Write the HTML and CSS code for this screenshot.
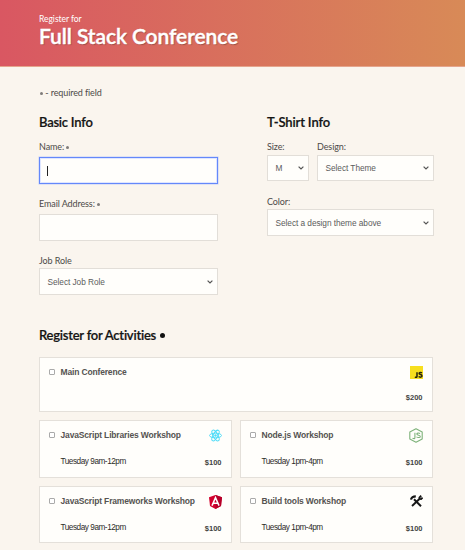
FILE: index.html
```html
<!DOCTYPE html>
<html lang="en">
<head>
<meta charset="utf-8">
<title>Full Stack Conference</title>
<link rel="stylesheet" href="styles.css">
</head>
<body>
<header class="hero">
  <p class="kicker">Register for</p>
  <h1>Full Stack Conference</h1>
</header>
<main>
  <p class="note"><i class="dot"></i> - required field</p>
  <div class="columns">
    <section>
      <h2 class="basic">Basic Info</h2>
      <div class="field name"><label>Name: <i class="dot"></i></label><div class="control focused"><span class="caret"></span></div></div>
      <div class="field email"><label>Email Address: <i class="dot"></i></label><div class="control"></div></div>
      <div class="field job"><label>Job Role</label><div class="control"><span>Select Job Role</span><svg class="chev" viewBox="0 0 6 4"><path d="M.6.6 3 3 5.4.6"/></svg></div></div>
    </section>
    <section>
      <h2 class="shirt">T-Shirt Info</h2>
      <div class="pair">
        <div class="field"><label>Size:</label><div class="control"><span>M</span><svg class="chev" viewBox="0 0 6 4"><path d="M.6.6 3 3 5.4.6"/></svg></div></div>
        <div class="field"><label>Design:</label><div class="control"><span>Select Theme</span><svg class="chev" viewBox="0 0 6 4"><path d="M.6.6 3 3 5.4.6"/></svg></div></div>
      </div>
      <div class="field color"><label>Color:</label><div class="control"><span>Select a design theme above</span><svg class="chev" viewBox="0 0 6 4"><path d="M.6.6 3 3 5.4.6"/></svg></div></div>
    </section>
  </div>
  <h2 class="activities">Register for Activities <i class="dot big"></i></h2>
  <div class="grid">
    <article class="card wide">
      <i class="box"></i><h3>Main Conference</h3>
      <svg class="icon" viewBox="0 0 13 13"><path fill="#f7df1e" d="M0 0h13v13H0z"/><path d="M7 6.200v4.200q0 1.300-2.200.7M12 6.900c-1-.8-2.900-.5-2.900.5 0 1.400 2.900.9 2.900 2.500 0 1.400-2.200 1.600-3.400.6" fill="none" stroke="#25230c" stroke-width="1.500"/></svg>
      <b class="price">$200</b>
    </article>
    <article class="card">
      <i class="box"></i><h3>JavaScript Libraries Workshop</h3>
      <svg class="icon" viewBox="0 0 13 13"><g fill="none" stroke="#4edcf8" stroke-width=".95"><ellipse cx="6.5" cy="6.5" rx="6" ry="2.3"/><ellipse cx="6.5" cy="6.5" rx="6" ry="2.3" transform="rotate(60 6.5 6.5)"/><ellipse cx="6.5" cy="6.5" rx="6" ry="2.3" transform="rotate(120 6.5 6.5)"/></g><circle cx="6.5" cy="6.5" r="1.200" fill="#4edcf8"/></svg>
      <p class="when">Tuesday 9am-12pm</p><b class="price">$100</b>
    </article>
    <article class="card">
      <i class="box"></i><h3>Node.js Workshop</h3>
      <svg class="icon node" viewBox="0 0 14 15"><g fill="none" stroke="#7fb37b"><path stroke-width="1.1" stroke-linejoin="round" d="m7 .7 6.2 3.4v6.8L7 14.3.8 10.900V4.100z"/><path stroke-width="1.100" d="M5.900 4.700v5.100q0 1.400-2.400.5M11 5.500c-1.300-.8-3.200-.5-3.200.6 0 1.600 3.500.7 3.500 2.300 0 1.400-2.500 1.500-3.800.5"/></g></svg>
      <p class="when">Tuesday 1pm-4pm</p><b class="price">$100</b>
    </article>
    <article class="card">
      <i class="box"></i><h3>JavaScript Frameworks Workshop</h3>
      <svg class="icon angular" viewBox="0 0 13 14"><path fill="#d3002d" d="M6.500 0 13 2.300l-1 8.700-5.500 3L1 11 0 2.300z"/><path fill="#b50029" d="M6.500 0 13 2.300l-1 8.700-5.500 3z"/><path fill="none" stroke="#fff" stroke-width="1.500" d="M3 10.600 6.500 2.600l3.500 8M4.500 8.200h4"/></svg>
      <p class="when">Tuesday 9am-12pm</p><b class="price">$100</b>
    </article>
    <article class="card">
      <i class="box"></i><h3>Build tools Workshop</h3>
      <svg class="icon tools" viewBox="0 0 13 12"><g fill="none" stroke="#151515"><path stroke-width="2" d="m4 4.200 7 7"/><path stroke-width="1.900" d="M2 11 9.400 4"/><path stroke-width="2.200" d="M1 4.600C1.500 2.300 3 1.300 5.800 1.300"/><path stroke-width="1.800" d="M11.200.7 9.400 2.500l.2 1.400 1.500.2L12.600 2.500"/></g></svg>
      <p class="when">Tuesday 1pm-4pm</p><b class="price">$100</b>
    </article>
  </div>
</main>
</body>
</html>
```
FILE: styles.css
```css
* { box-sizing: border-box; }
body, h1, h2, h3, p { margin: 0; }
body {
  background: #faf5ee;
  font: 9px/12px Lato, sans-serif;
  letter-spacing: -.1px;
  color: #4c4a48;
  height: 550px;
  overflow: hidden;
}
.hero {
  height: 67px;
  padding: 13px 39px 0;
  color: #fff;
  background: linear-gradient(90deg, #d95762, #d88a57);
  border-bottom: 1px solid #e5a58d;
}
.kicker { font-size: 8.5px; line-height: 13px; letter-spacing: -.03px; }
h1 {
  font-size: 21px;
  line-height: 20px;
  font-weight: 600;
  letter-spacing: -.08px;
  text-shadow: 1px 1px 1px #7a403a99;
  -webkit-text-stroke: .4px #fff;
  white-space: nowrap;
}
main { padding: 20px 32px 0 39px; }
.note { height: 12px; padding-left: 1px; }
.dot {
  display: inline-block;
  width: 3px;
  height: 3px;
  border-radius: 50%;
  background: #7f7c7a;
  vertical-align: 1px;
}
.big { width: 5px; height: 5px; background: #111; vertical-align: 2px; margin-left: 1px; }
.columns {
  display: grid;
  grid-template-columns: 179px 167px;
  column-gap: 49px;
  margin-top: 15px;
  height: 182px;
}
h2 {
  font-size: 13px;
  line-height: 16px;
  font-weight: 600;
  letter-spacing: -.24px;
  color: #141414;
  -webkit-text-stroke: .2px #141414;
  white-space: nowrap;
}
.columns h2 { margin-bottom: 11px; }
.columns .shirt { letter-spacing: -.15px; }
label { display: block; height: 14px; line-height: 12px; }
.control {
  display: flex;
  align-items: center;
  justify-content: space-between;
  height: 27px;
  padding: 0 4px 0 7.5px;
  background: #fffefb;
  border: 1px solid #e2ded8;
  font: 8.3px "Liberation Sans", sans-serif;
  letter-spacing: -.05px;
  color: #5c5c5c;
}
.focused { border-color: #6488fa; box-shadow: 0 0 0 .5px #c3cff8, inset 0 0 0 1px #dfe6ff; }
.caret { width: 1px; height: 10px; background: #222; margin-left: -.5px; }
.chev { width: 6px; height: 4px; fill: none; stroke: #555; stroke-width: 1.2; }
.name { height: 57px; }
.name label, .email label { height: 16px; }
.email { height: 57px; }
.job label, .color label { height: 13px; }
.pair { display: grid; grid-template-columns: 42px 117px; gap: 8px; height: 55px; }
.pair .control { height: 26px; }
.activities { margin-top: 31px; height: 30px; }
.grid {
  display: grid;
  grid-template-columns: 193px 193px;
  grid-template-rows: 55px 57.5px 57.5px;
  gap: 8px;
}
.card {
  display: grid;
  grid-template-columns: 12.5px minmax(0, 1fr) 22px;
  grid-template-rows: 26px 1fr;
  padding: 8px 9.5px 0 8px;
  background: #fffefb;
  border: 1px solid #e4e0da;
  font-family: "Liberation Sans", sans-serif;
}
.wide { grid-column: 1 / 3; }
.box { width: 6px; height: 6px; margin: 3px 0 0 1px; border: 1px solid #aaa; border-radius: 1px; background: #fff; }
h3 { font-size: 8.5px; line-height: 13px; letter-spacing: -.16px; color: #555351; white-space: nowrap; }
.icon { width: 13px; height: 13px; justify-self: end; }
.node { width: 14px; height: 15px; margin-top: -1px; }
.angular { height: 14px; }
.tools { height: 12px; }
.when { grid-column: 2; font-size: 8.2px; line-height: 13px; letter-spacing: -.45px; color: #2d2b29; white-space: nowrap; }
.price { grid-column: 3; justify-self: end; font-size: 7.5px; line-height: 12px; letter-spacing: 0; margin-top: 2px; color: #444; }
.wide .price { margin-top: 0; }
```
